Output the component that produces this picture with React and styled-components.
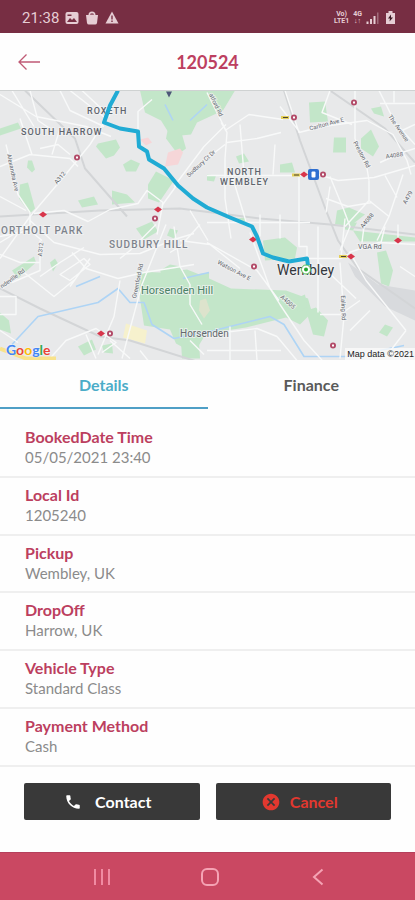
import React, { useState } from 'react';
import styled, { createGlobalStyle } from 'styled-components';
import { MdPhone, MdCancel } from 'react-icons/md';

const GlobalStyle = createGlobalStyle`
  * {
    box-sizing: border-box;
  }
  body {
    margin: 0;
    background-color: #fefefe;
    font-family: Lato, 'Liberation Sans', sans-serif;
  }
`;

const Screen = styled.div`
  min-height: 100vh;
  display: flex;
  flex-direction: column;
`;

const StatusBar = styled.div`
  height: 33px;
  padding: 2px 18px 0 22px;
  display: flex;
  align-items: center;
  justify-content: space-between;
  background-color: #772e43;
  color: #e6cdd4;
`;

const StatusGroup = styled.div`
  display: flex;
  align-items: center;
  gap: ${(props) => props.$gap};
`;

const Clock = styled.span`
  font-family: Roboto, sans-serif;
  font-size: 15px;
`;

const Network = styled.span`
  font-family: Roboto, sans-serif;
  font-size: 7px;
  font-weight: 700;
  line-height: 7px;
  text-align: center;
  white-space: pre-line;
`;

const Header = styled.header`
  height: 57px;
  padding: 0 16px;
  display: grid;
  grid-template-columns: 26px 1fr 26px;
  align-items: center;
  h1 {
    margin: 0;
    color: #bd3f60;
    font-size: 18px;
    font-weight: 700;
    text-align: center;
  }
`;

const IconButton = styled.button`
  display: flex;
  align-items: center;
  justify-content: center;
  padding: 0;
  border: none;
  background: none;
  color: ${(props) => props.$color};
`;

const MapBox = styled.div`
  position: relative;
  height: 270px;
  overflow: hidden;
  border-top: 1px solid #cfd2d2;
  > svg {
    display: block;
    width: 100%;
    height: 100%;
  }
`;

const GoogleMark = styled.div`
  position: absolute;
  left: 6px;
  bottom: 1px;
  font-family: Lato, sans-serif;
  font-size: 14px;
  font-weight: 700;
  line-height: 18px;
  text-shadow: 0 0 2px #fff;
`;

const Letter = styled.span`
  color: ${(props) => props.$color};
`;

const Copyright = styled.div`
  position: absolute;
  right: 0;
  bottom: 0;
  padding: 0 1px 0 2px;
  background-color: rgba(250, 250, 250, 0.8);
  color: #222;
  font-family: 'Liberation Sans', sans-serif;
  font-size: 9px;
  line-height: 12px;
`;

const Tabs = styled.div`
  display: grid;
  grid-template-columns: 1fr 1fr;
`;

const Tab = styled.button`
  height: 49px;
  padding: 2px 0 0;
  border: none;
  border-bottom: 2px solid ${(props) => (props.$active ? '#4f9fc6' : 'transparent')};
  background: none;
  color: ${(props) => (props.$active ? '#4bacc8' : '#5a5a5a')};
  font-family: inherit;
  font-size: 16px;
  font-weight: 700;
`;

const Details = styled.dl`
  flex: 1;
  display: grid;
  grid-auto-rows: 1fr;
  margin: 0;
  padding-top: 11px;
`;

const Row = styled.div`
  padding: 6px 25px;
  border-bottom: 2px solid #efefef;
  line-height: 21px;
  dt {
    color: #bc3f5f;
    font-size: 16px;
    font-weight: 700;
  }
  dd {
    margin: 0;
    color: #8b8b8b;
    font-size: 15px;
  }
`;

const Actions = styled.div`
  display: grid;
  grid-template-columns: 1fr 1fr;
  gap: 16px;
  padding: 16px 24px 32px;
`;

const ActionButton = styled.button`
  display: flex;
  align-items: center;
  justify-content: center;
  gap: ${(props) => props.$gap};
  height: 37px;
  padding: 0 8px 0 0;
  border: none;
  border-radius: 2px;
  background-color: #393939;
  color: ${(props) => props.$color};
  font-family: inherit;
  font-size: 16px;
  font-weight: 700;
`;

const NavBar = styled.nav`
  height: 48px;
  padding: 0 43px 0 48px;
  display: grid;
  grid-template-columns: 1fr 1fr 1fr;
  border-top: 1px solid #b5405c;
  background-color: #ca4862;
`;

const parks = [
  'M140 90h95l-12 20-26 12-6 12-20 2-10-16-16-8z',
  'M168 128l14 6 4 14-8 6-12-16z',
  'M0 128l18-6 3 6-21 7z',
  'M98 143l18-4 4 8-6 8-8 3-10-12z',
  'M123 164l8-5 9 4-4 8-10 0z',
  'M20 184l8-2 7 26-5 5-11-15z',
  'M28 160l4 0 3 9-3 3-5-5z',
  'M148 184l8-13 18 9-15 22-11-4z',
  'M78 200l16-4 4 8-16 3z',
  'M112 190l15 4 8 8-23 2z',
  'M309 102l16-1 3 20-18 1z',
  'M334 137h12v15h-13z',
  'M361 138l10-9 8 17-6 10-12-8z',
  'M371 108l10-2 3 10-10-3z',
  'M280 164l12-2 3 10-15 0z',
  'M236 156l8-3 5 8-10 2z',
  'M337 210l12-3 16 7-14 11-16-1z',
  'M207 174l9 1-2 6-7-1z',
  'M236 218l9-1 2 7-7-1z',
  'M263 240l22-3 12 10-2 11-30 2z',
  'M136 228l16-7 6 10-14 8z',
  'M170 228l8 2-4 8-7-3z',
  'M12 270l22-14 2 6-18 16z',
  'M50 262l5-4 3 5-5 8z',
  'M0 312l9 8 2 13-11-4z',
  'M136 271l24 1 27-3 20 8 24 11 55 2 22 8 4 14-12 12-14-7-40 10-40 6-12 20-18-10-6-14-26-4z',
  'M180 325h18l2 33h-18z',
  'M160 270l10-6 11 2 1 12-18 2z',
  'M183 280l12-6 14-2v7l-24 4z',
  'M306 310l10-3 12 13-4 16-11-2z',
  'M291 300l14-6 2 12-8 6z',
  'M377 252l9-2 7 20-4 16-8-3z',
  'M345 223l12-1-4 8-8-1z',
  'M353 230l62 7v4l-55 0z',
  'M385 324l8 3-6 9-8-4z',
  'M78 346l14-7 4 10-12 6z',
  'M102 345l10-2 1 10-9-1z',
];

const streets = [
  'M0 94l36 22 50 10 25 10M12 90l22 36M30 90l8 30 12 8M60 90l10 20 34 16M70 90l36 28M82 90l28 26',
  'M0 166l30-12 40 4 8 8M20 118l12 36M60 128l-8 26M70 154l-12-10-18 4',
  'M104 122l-14 22-26 32-34 40-30 42',
  'M6 144l12 50 12 18v12l-30 18M0 196l26 14',
  'M34 213l30-3 24 11 22-12 28-6 9-13 16 12-6 32M0 236l30-6 12 10M30 220l24 22 46 12 40-1 34-14 20-6',
  'M84 247l-24 15-20 14M72 252l14 16 32 10 26-6 50-8M40 240v30l-28 12M0 254l20 8 20 0',
  'M60 274l24-16 6 6-20 16zM70 286l20-28M0 296h16v18H0M24 272l30 24 22-18',
  'M166 224l-24 60-20 74M156 224l-26 26M130 250l-10 8M120 280l-6 36-16 38',
  'M174 226l6 40 10 18v20l12 20M200 224l-20 22-10 6M190 210l18 30',
  'M138 131v-20l14-12M174 186l30-40 22-22M162 205l16-22M192 198l14 8',
  'M207 92l20 40-2 26v40l6 40M227 132l-6-10M207 158l18-14M225 130l24-16 34 5M227 142l30-4 24-6M240 124l4 50M275 144l-2 30M207 175h100M232 175l14 46',
  'M285 90l14 42 24-6 44-6 26 14 14 26 4 14M300 132l-20-26M330 90l-8 22 30 12M355 90v48l12 30 2 12M299 175v70M310 222H207',
  'M318 174l20 6 36-3 41-12M330 186l-4 26M326 198l22 8 24-4M369 180v20l20 16-12 24M389 216l14-42M380 162l22-10 13-4M385 175l12 22M369 200l-24 26M379 90l16 32 20 22M380 103h35M394 90v12M402 130l13-6',
  'M330 176l14 34 6 16-10 24',
  'M250 232l20 56 10 16 24 36 22 24M207 242l50 28 22 30M180 240l30 4 30 24M307 258h34l8-5M318 226v86M318 262l38 36M340 262l4 54-4 42M341 258l4-40M350 252l16 28 40 50M307 258v-12h-8v-16',
  'M349 252l30-10 36 2M364 226l-2 16M385 226l-4 16M398 244v-20M360 300l-20 14h-20M370 310l-20 20M406 330l-20 26M400 266l15 10',
  'M207 334l50-6 20 8M230 326v34M255 330l2 30M207 350h74M277 336l20 24M190 340l14 14',
  'M50 358l16-18 30-12 20 14-14 10M110 340l20 18M140 350l8 10M86 334l10 24M0 330l18 12',
  'M260 214v22M280 214v24',
];

const rails = [
  'M25 90l50 48 10 30 42 48',
  'M284 90l16 50 26 70 12 30 20 28 57 40',
  'M330 90l55 38 30 34',
  'M0 288l40 20 60 28 30 4 70 22',
  'M0 216l100-6 80-2 80 10 70 6 85 10',
];

const rivers = [
  'M12 344l26-28 60-14 20-14 12 14 14 0 8 22 22 14 40-8 56-14 14 8 20 32h48',
  'M76 286l24-10M165 104l8 16M190 120l17-16M183 278l26-6M380 350l24-5',
];

const labels = [
  { text: 'ROXETH', x: 87, y: 113, size: 9, spaced: true },
  { text: 'SOUTH HARROW', x: 21, y: 134, size: 9, spaced: true },
  { text: 'NORTH', x: 227, y: 174, size: 9, spaced: true },
  { text: 'WEMBLEY', x: 220, y: 184, size: 9, spaced: true },
  { text: 'ORTHOLT PARK', x: 1, y: 233, size: 10, spaced: true, fill: '#7d838c' },
  { text: 'SUDBURY HILL', x: 109, y: 247, size: 10, spaced: true, fill: '#7d838c' },
  { text: 'Horsenden Hill', x: 141, y: 293, size: 11, fill: '#4b8267' },
  { text: 'Horsenden', x: 180, y: 336, size: 10, fill: '#64696e' },
  { text: 'Wembley', x: 277, y: 274, size: 14, fill: '#33373d' },
  { text: 'Carlton Ave E', x: 310, y: 130, size: 6, turn: -15 },
  { text: 'The Avenue', x: 388, y: 116, size: 6, turn: 55 },
  { text: 'Preston Rd', x: 353, y: 142, size: 6, turn: 62 },
  { text: 'Sudbury Ct Dr', x: 189, y: 177, size: 6, turn: -43 },
  { text: 'atford Rd', x: 209, y: 94, size: 6, turn: 65 },
  { text: 'Alexandra Ave', x: 7, y: 154, size: 6, turn: 78 },
  { text: 'A312', x: 57, y: 184, size: 6, turn: -50 },
  { text: 'A312', x: 42, y: 256, size: 6, turn: -85 },
  { text: 'A4088', x: 386, y: 158, size: 6, turn: -8 },
  { text: 'A479', x: 406, y: 204, size: 6, turn: -60 },
  { text: 'A4088', x: 363, y: 228, size: 6, turn: -50 },
  { text: 'VGA Rd', x: 358, y: 248, size: 7 },
  { text: 'ndeville Rd', x: 2, y: 288, size: 6, turn: -36 },
  { text: 'Greenford Rd', x: 136, y: 298, size: 6, turn: -78 },
  { text: 'Watson Ave E', x: 217, y: 263, size: 6, turn: 28 },
  { text: 'A4005', x: 280, y: 297, size: 6, turn: 42 },
  { text: 'Ealing Rd', x: 341, y: 295, size: 6, turn: 88 },
];

const stations = [
  [77, 157],
  [155, 218],
  [294, 117],
  [354, 102],
  [323, 174],
  [254, 266],
  [333, 345],
  [110, 333],
];

const railStops = [
  [43, 214],
  [158, 209],
  [304, 174],
  [253, 239],
  [398, 240],
  [351, 256],
  [101, 333],
];

const bookingInfo = [
  { label: 'BookedDate Time', value: '05/05/2021 23:40' },
  { label: 'Local Id', value: '1205240' },
  { label: 'Pickup', value: 'Wembley, UK' },
  { label: 'DropOff', value: 'Harrow, UK' },
  { label: 'Vehicle Type', value: 'Standard Class' },
  { label: 'Payment Method', value: 'Cash' },
];

const financeInfo = [{ label: 'Payment Method', value: 'Cash' }];

const RouteMap = () => (
  <MapBox>
    <svg viewBox="0 90 415 270" preserveAspectRatio="xMidYMid slice" role="img" aria-label="Route">
      <rect x="0" y="90" width="415" height="270" fill="#e8e9ea" />
      <g fill="#c3e6c9">
        {parks.map((d) => (
          <path key={d} d={d} />
        ))}
      </g>
      <path d="M168 152l12-4 3 4-5 12-13 2zM140 139l8-2 4 5-6 3z" fill="#f6d6d8" />
      <path d="M200 300l6-2 4 12-6 8-5-8z" fill="#dde3cc" />
      <path d="M126 323l21 7-2 13-22-6z" fill="#f6f1cd" />
      <path d="M348 262l30 22 37 6v30l-30-14-30-30z" fill="#d8dadd" />
      <g fill="none" stroke="#d3d5d7" strokeWidth="2">
        {rails.map((d) => (
          <path key={d} d={d} />
        ))}
      </g>
      <g fill="none" stroke="#aed4f5" strokeWidth="1.6" strokeLinejoin="round">
        {rivers.map((d) => (
          <path key={d} d={d} />
        ))}
      </g>
      <g fill="none" stroke="#f8f9f9" strokeWidth="1.4" strokeLinejoin="round">
        {streets.map((d) => (
          <path key={d} d={d} />
        ))}
      </g>
      <path d="M0 348l26 10h30" fill="none" stroke="#f8e28b" strokeWidth="4" />
      <path d="M166 91h6l-3 6z" fill="#4c5578" />
      {railStops.map(([x, y]) => (
        <path key={`${x}-${y}`} d={`M${x - 4} ${y}l4-3 4 3-4 3z`} fill="#d8354b" />
      ))}
      {stations.map(([x, y]) => (
        <g key={`${x}-${y}`}>
          <circle cx={x} cy={y} r="3" fill="#b24a68" />
          <path d={`M${x - 1} ${y - 1}h2v2h-2z`} fill="#fff" />
        </g>
      ))}
      <path d="M281 115.500h8v3h-8zM292 173h8v3h-8zM339 254.500h8v3h-8z" fill="#e4cf59" />
      <path d="M283 116.500h5v1h-5zM294 174h5v1h-5zM341 255.500h5v1h-5z" fill="#4a4534" />
      <rect x="308" y="168.500" width="11" height="11" rx="2" fill="#2f6fd0" />
      <rect x="311.500" y="171" width="4" height="6" rx="1" fill="#fff" />
      <g fontFamily="Roboto, sans-serif" stroke="#f3f4f4" strokeWidth="2" strokeOpacity="0.7" paintOrder="stroke">
        {labels.map(({ text, x, y, size, spaced, turn = 0, fill = '#5f656e' }) => (
          <text
            key={`${text}-${x}`}
            x={x}
            y={y}
            fill={fill}
            fontSize={size}
            fontWeight={spaced ? 500 : 400}
            letterSpacing={spaced ? 1 : 0}
            transform={`rotate(${turn} ${x} ${y})`}
          >
            {text}
          </text>
        ))}
      </g>
      <path
        d="M118 90l-8 15-6 17 16 6 18 3 1 15 8 5 2 8 15 9 14 17 15 13 14 9 23 10 22 9 5 10 6 17 10 4 16 4 18-3 1 7"
        fill="none"
        stroke="#20abd4"
        strokeWidth="4"
        strokeLinejoin="round"
      />
      <circle cx="306" cy="269" r="4.500" fill="#fff" stroke="#55bd55" strokeWidth="1" />
      <circle cx="306" cy="269" r="2" fill="#23a52e" />
    </svg>
    <GoogleMark>
      <Letter $color="#4285f4">G</Letter>
      <Letter $color="#ea4335">o</Letter>
      <Letter $color="#fbbc05">o</Letter>
      <Letter $color="#4285f4">g</Letter>
      <Letter $color="#34a853">l</Letter>
      <Letter $color="#ea4335">e</Letter>
    </GoogleMark>
    <Copyright>Map data ©2021</Copyright>
  </MapBox>
);

const App = () => {
  const [tab, setTab] = useState('details');
  const rows = tab === 'details' ? bookingInfo : financeInfo;

  return (
    <Screen>
      <GlobalStyle />
      <StatusBar>
        <StatusGroup $gap="6px">
          <Clock>21:38</Clock>
          <svg width="14" height="12" viewBox="0 0 14 12">
            <rect x="0.500" width="13" height="12" rx="2" fill="currentColor" />
            <path d="M2 10l3-4 2 2 2-2 3 4zM2.500 2.500h4v1.500h-4z" fill="#772e43" />
          </svg>
          <svg width="14" height="14" viewBox="0 0 14 14">
            <path d="M1 4h2.500a3.500 3.500 0 0 1 7 0H13l-1 8a2 2 0 0 1-2 1.500H4A2 2 0 0 1 2 12z" fill="currentColor" />
            <path d="M5 4a2 2 0 0 1 4 0z" fill="#9c6475" />
          </svg>
          <svg width="14" height="13" viewBox="0 0 14 13">
            <path d="M7 0.500L13.500 12.500H0.500z" fill="currentColor" />
            <path d="M6.300 4.500h1.400v4H6.300zM6.300 9.500h1.400v1.400H6.300z" fill="#772e43" />
          </svg>
        </StatusGroup>
        <StatusGroup $gap="4px">
          <Network>{'Vo)\nLTE1'}</Network>
          <Network>{'4G\n↓↑'}</Network>
          <svg width="13" height="12" viewBox="0 0 13 12">
            <path d="M0.500 9.500h2V12h-2zM4 7h2v5H4zM7.500 4h2v8h-2z" fill="currentColor" />
            <path d="M11 0.500h1.500V12H11z" fill="#a06b7a" />
          </svg>
          <svg width="14" height="13" viewBox="0 0 14 13">
            <path d="M5.500 0h4v2H12v11H3V2h2.500z" fill="currentColor" />
            <path d="M8 3.500L5 7.500h2L6.500 10.500 10 6.500H8z" fill="#3a1822" />
          </svg>
        </StatusGroup>
      </StatusBar>

      <Header>
        <IconButton type="button" aria-label="Back" $color="#c05a75">
          <svg width="22" height="16" viewBox="0 0 22 16" fill="none" stroke="currentColor" strokeWidth="1.300">
            <path d="M22 8H1M8.500 0.500L1 8l7.500 7.500" />
          </svg>
        </IconButton>
        <h1>120524</h1>
      </Header>

      <RouteMap />

      <Tabs role="tablist">
        <Tab
          type="button"
          role="tab"
          aria-selected={tab === 'details'}
          $active={tab === 'details'}
          onClick={() => setTab('details')}
        >
          Details
        </Tab>
        <Tab
          type="button"
          role="tab"
          aria-selected={tab === 'finance'}
          $active={tab === 'finance'}
          onClick={() => setTab('finance')}
        >
          Finance
        </Tab>
      </Tabs>

      <Details>
        {rows.map(({ label, value }) => (
          <Row key={label}>
            <dt>{label}</dt>
            <dd>{value}</dd>
          </Row>
        ))}
      </Details>

      <Actions>
        <ActionButton type="button" $color="#fff" $gap="13px">
          <MdPhone size={18} />
          Contact
        </ActionButton>
        <ActionButton type="button" $color="#e2382f" $gap="9px">
          <MdCancel size={20} />
          Cancel
        </ActionButton>
      </Actions>

      <NavBar>
        <IconButton type="button" aria-label="Recent apps" $color="#f08ba2">
          <svg width="18" height="18" viewBox="0 0 18 18" stroke="currentColor" strokeWidth="2">
            <path d="M2 1v16M9 1v16M16 1v16" />
          </svg>
        </IconButton>
        <IconButton type="button" aria-label="Home" $color="#f5a3b4">
          <svg width="18" height="18" viewBox="0 0 18 18" fill="none" stroke="currentColor" strokeWidth="2">
            <rect x="1" y="1" width="16" height="16" rx="5" />
          </svg>
        </IconButton>
        <IconButton type="button" aria-label="Go back" $color="#f5a3b4">
          <svg width="12" height="18" viewBox="0 0 12 18" fill="none" stroke="currentColor" strokeWidth="2">
            <path d="M10.500 1.500L2 9l8.500 7.500" />
          </svg>
        </IconButton>
      </NavBar>
    </Screen>
  );
};

export default App;
